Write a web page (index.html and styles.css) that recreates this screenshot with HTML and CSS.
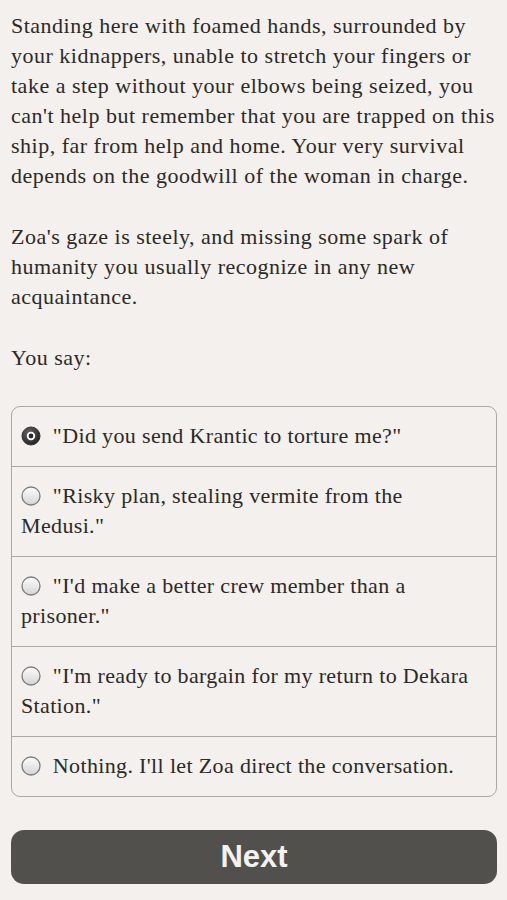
FILE: index.html
```html
<!DOCTYPE html>
<html lang="en">
<head>
  <meta charset="UTF-8">
  <title>You say</title>
  <link rel="stylesheet" href="styles.css">
</head>
<body>
  <div class="page">
    <div class="story">
      <p>Standing here with foamed hands, surrounded by your kidnappers, unable to stretch your fingers or take a step without your elbows being seized, you can't help but remember that you are trapped on this ship, far from help and home. Your very survival depends on the goodwill of the woman in charge.</p>
      <p>Zoa's gaze is steely, and missing some spark of humanity you usually recognize in any new acquaintance.</p>
      <p>You say:</p>
    </div>

    <!-- choice list -->
    <div class="choices">
      <label class="choice">
        <svg class="radio" width="20" height="20" viewBox="0 0 20 20">
          <defs>
            <radialGradient id="on" cx="40%" cy="35%" r="70%">
              <stop offset="0" stop-color="#6a6a6a"/>
              <stop offset="1" stop-color="#1e1e1e"/>
            </radialGradient>
          </defs>
          <circle cx="10" cy="10" r="9" fill="url(#on)" stroke="#333" stroke-width="1"/>
          <circle cx="10" cy="10" r="4.2" fill="#fff"/>
          <circle cx="10" cy="10" r="2.4" fill="#2a2a2a"/>
        </svg>
        <span class="text">"Did you send Krantic to torture me?"</span>
      </label>
      <label class="choice">
        <svg class="radio" width="20" height="20" viewBox="0 0 20 20">
          <defs>
            <linearGradient id="off" x1="0" y1="0" x2="0" y2="1">
              <stop offset="0" stop-color="#fdfdfd"/>
              <stop offset="1" stop-color="#d4d4d4"/>
            </linearGradient>
          </defs>
          <circle cx="10" cy="10" r="9" fill="url(#off)" stroke="#7d7d7d" stroke-width="1.3"/>
        </svg>
        <span class="text">"Risky plan, stealing vermite from the Medusi."</span>
      </label>
      <label class="choice">
        <svg class="radio" width="20" height="20" viewBox="0 0 20 20">
          <circle cx="10" cy="10" r="9" fill="url(#off)" stroke="#7d7d7d" stroke-width="1.3"/>
        </svg>
        <span class="text">"I'd make a better crew member than a prisoner."</span>
      </label>
      <label class="choice">
        <svg class="radio" width="20" height="20" viewBox="0 0 20 20">
          <circle cx="10" cy="10" r="9" fill="url(#off)" stroke="#7d7d7d" stroke-width="1.3"/>
        </svg>
        <span class="text">"I'm ready to bargain for my return to Dekara Station."</span>
      </label>
      <label class="choice">
        <svg class="radio" width="20" height="20" viewBox="0 0 20 20">
          <circle cx="10" cy="10" r="9" fill="url(#off)" stroke="#7d7d7d" stroke-width="1.3"/>
        </svg>
        <span class="text">Nothing. I'll let Zoa direct the conversation.</span>
      </label>
    </div>

    <button class="next">Next</button>
  </div>
</body>
</html>
```

FILE: styles.css
```css
body {
  margin: 0;
  padding: 0;
  background: #f3f0ed;
  color: #2b2a28;
  font-family: "Liberation Serif", "Times New Roman", serif;
}
.page {
  padding: 11px 10px 0 11px;
}
.story p {
  margin: 0 0 31px;
  font-size: 22px;
  line-height: 30px;
  letter-spacing: 0.5px;
}
.story p:last-child {
  margin-bottom: 33px;
}
/* Choices box */
.choices {
  border: 1.5px solid #aaa7a4;
  border-radius: 9px;
}
.choice {
  display: block;
  padding: 14px 14px 15px 9px;
  font-size: 22px;
  line-height: 30px;
  letter-spacing: 0.35px;
  border-bottom: 1.5px solid #aaa7a4;
}
.choice:last-child {
  border-bottom: none;
}
.radio {
  vertical-align: -3px;
  margin: 0 6px 0 0;
}
.next {
  display: block;
  width: 100%;
  height: 54px;
  margin-top: 33px;
  border: none;
  border-radius: 13px;
  background: #52504d;
  color: #f4f2ee;
  font-family: "Liberation Sans", Arial, sans-serif;
  font-weight: bold;
  font-size: 31px;
}
```
